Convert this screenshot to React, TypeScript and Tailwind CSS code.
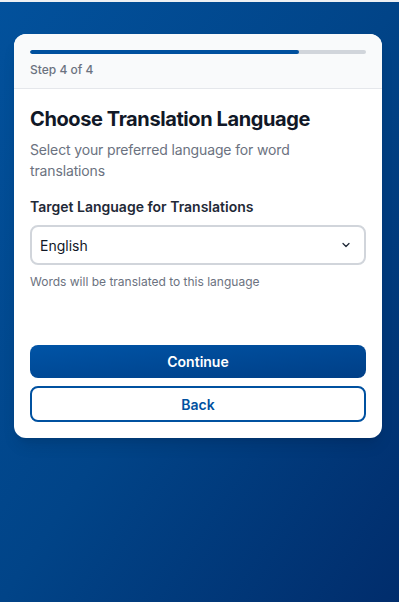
import React from "react";

export default function App() {
  return (
    <div
      className="w-[399px] h-[602px] overflow-hidden bg-gradient-to-br from-[#02519c] via-[#014488] to-[#012d6c] flex flex-col"
      style={{ fontFamily: "Inter, 'Noto Sans', sans-serif" }}
    >
      <div className="h-[2px] w-full bg-[#eef0f3] shrink-0" />
      <div className="mt-[32px] ml-[14px] w-[368px] bg-white rounded-xl overflow-hidden shadow-lg">
        <div className="bg-[#f9fafb] border-b border-[#e5e7eb] px-4 pt-4 pb-[10px]">
          <div className="h-[4px] w-full rounded-full bg-[#d1d5db] overflow-hidden">
            <div className="h-full bg-[#00509e] rounded-full" style={{ width: "80%" }} />
          </div>
          <div className="mt-2 text-[12px] leading-4 font-medium text-[#6b7280]">Step 4 of 4</div>
        </div>
        <div className="p-4">
          <h1 className="text-[20px] leading-7 font-bold tracking-[-0.02em] text-[#111827]">Choose Translation Language</h1>
          <p className="mt-[6px] text-[14px] leading-[21px] tracking-[-0.01em] text-[#6b7280]">
            Select your preferred language for word translations
          </p>
          <label className="block mt-4 text-[14px] leading-5 font-semibold text-[#1f2937]">
            Target Language for Translations
          </label>
          <div className="mt-2 h-[40px] border-2 border-[#d1d5db] rounded-lg flex items-center justify-between pl-2 pr-3">
            <span className="text-[14px] text-[#111827]">English</span>
            <svg width="12" height="12" viewBox="0 0 24 24" fill="none" stroke="#1f2937" strokeWidth="2.5" strokeLinecap="round" strokeLinejoin="round">
              <path d="M6 9l6 6 6-6" />
            </svg>
          </div>
          <p className="mt-[9px] text-[12px] leading-4 text-[#6b7280]">Words will be translated to this language</p>
          <div className="mt-[55px] flex flex-col gap-2">
            <button className="h-[33px] w-full rounded-lg bg-gradient-to-br from-[#0054a6] to-[#003f87] text-white text-[14px] font-semibold">
              Continue
            </button>
            <button className="h-[36px] w-full rounded-lg bg-white border-2 border-[#0051a0] text-[#0051a0] text-[14px] font-semibold">
              Back
            </button>
          </div>
        </div>
      </div>
    </div>
  );
}
